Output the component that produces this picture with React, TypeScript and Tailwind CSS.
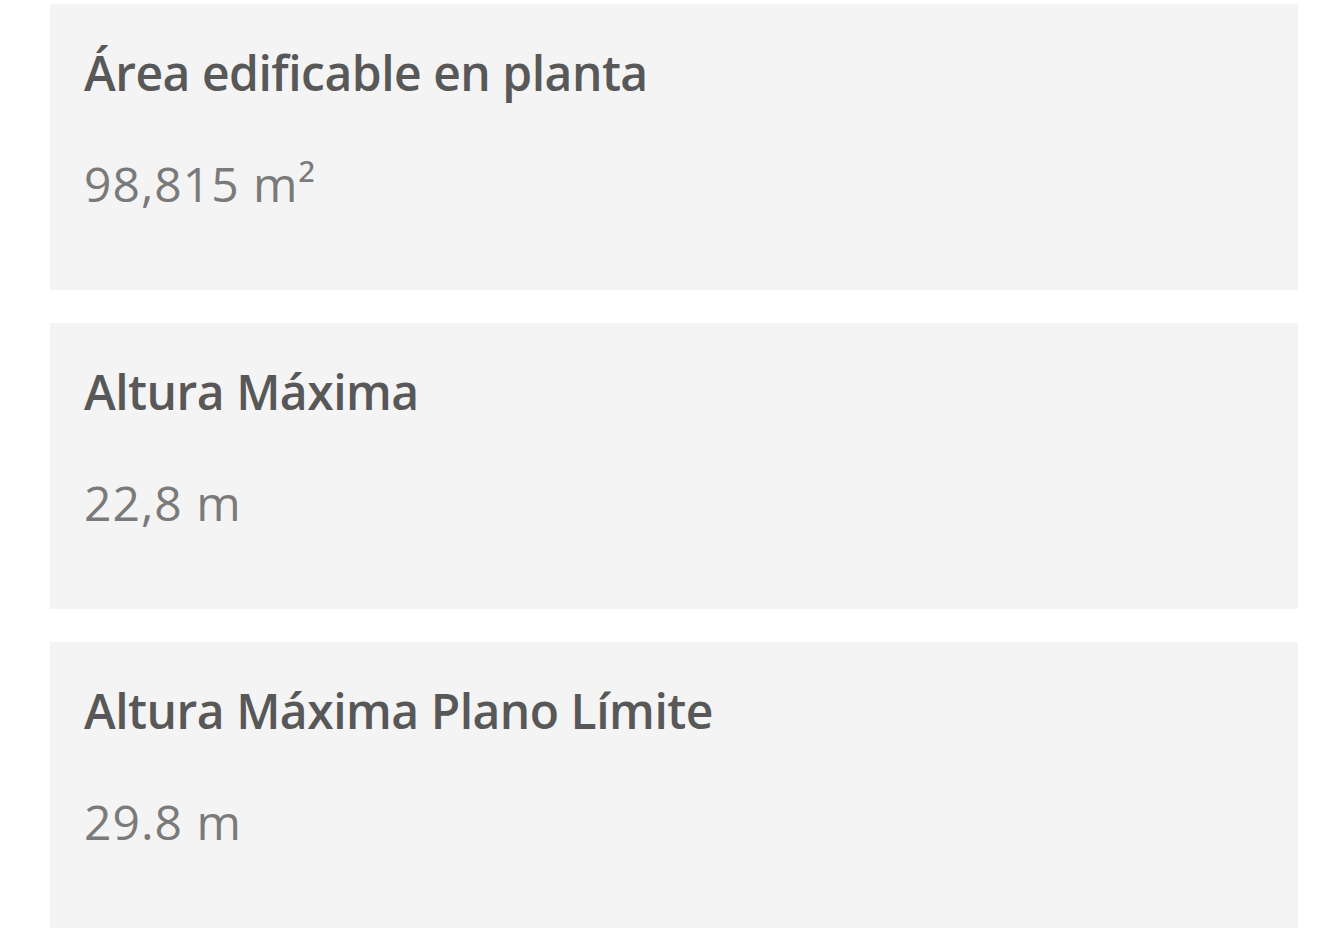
import React from "react";

const items = [
  { title: "Área edificable en planta", value: "98,815 m²" },
  { title: "Altura Máxima", value: "22,8 m" },
  { title: "Altura Máxima Plano Límite", value: "29.8 m" },
];

export default function App() {
  return (
    <div className="min-h-[950px] w-[1323px] bg-white pt-[4px] pl-[50px] pr-[25px] flex flex-col gap-[33px]" style={{ fontFamily: '"Open Sans", "Noto Sans", sans-serif' }}>
      {items.map((it) => (
        <div key={it.title} className="h-[286px] bg-[#f4f4f4] pl-[34px] pt-[41px]">
          <div className="text-[48px] leading-[56px] font-semibold text-[#585858] tracking-[-0.5px]">{it.title}</div>
          <div className="mt-[55px] text-[48px] leading-[56px] text-[#7a7a7a] tracking-[1px]">{it.value}</div>
        </div>
      ))}
    </div>
  );
}
